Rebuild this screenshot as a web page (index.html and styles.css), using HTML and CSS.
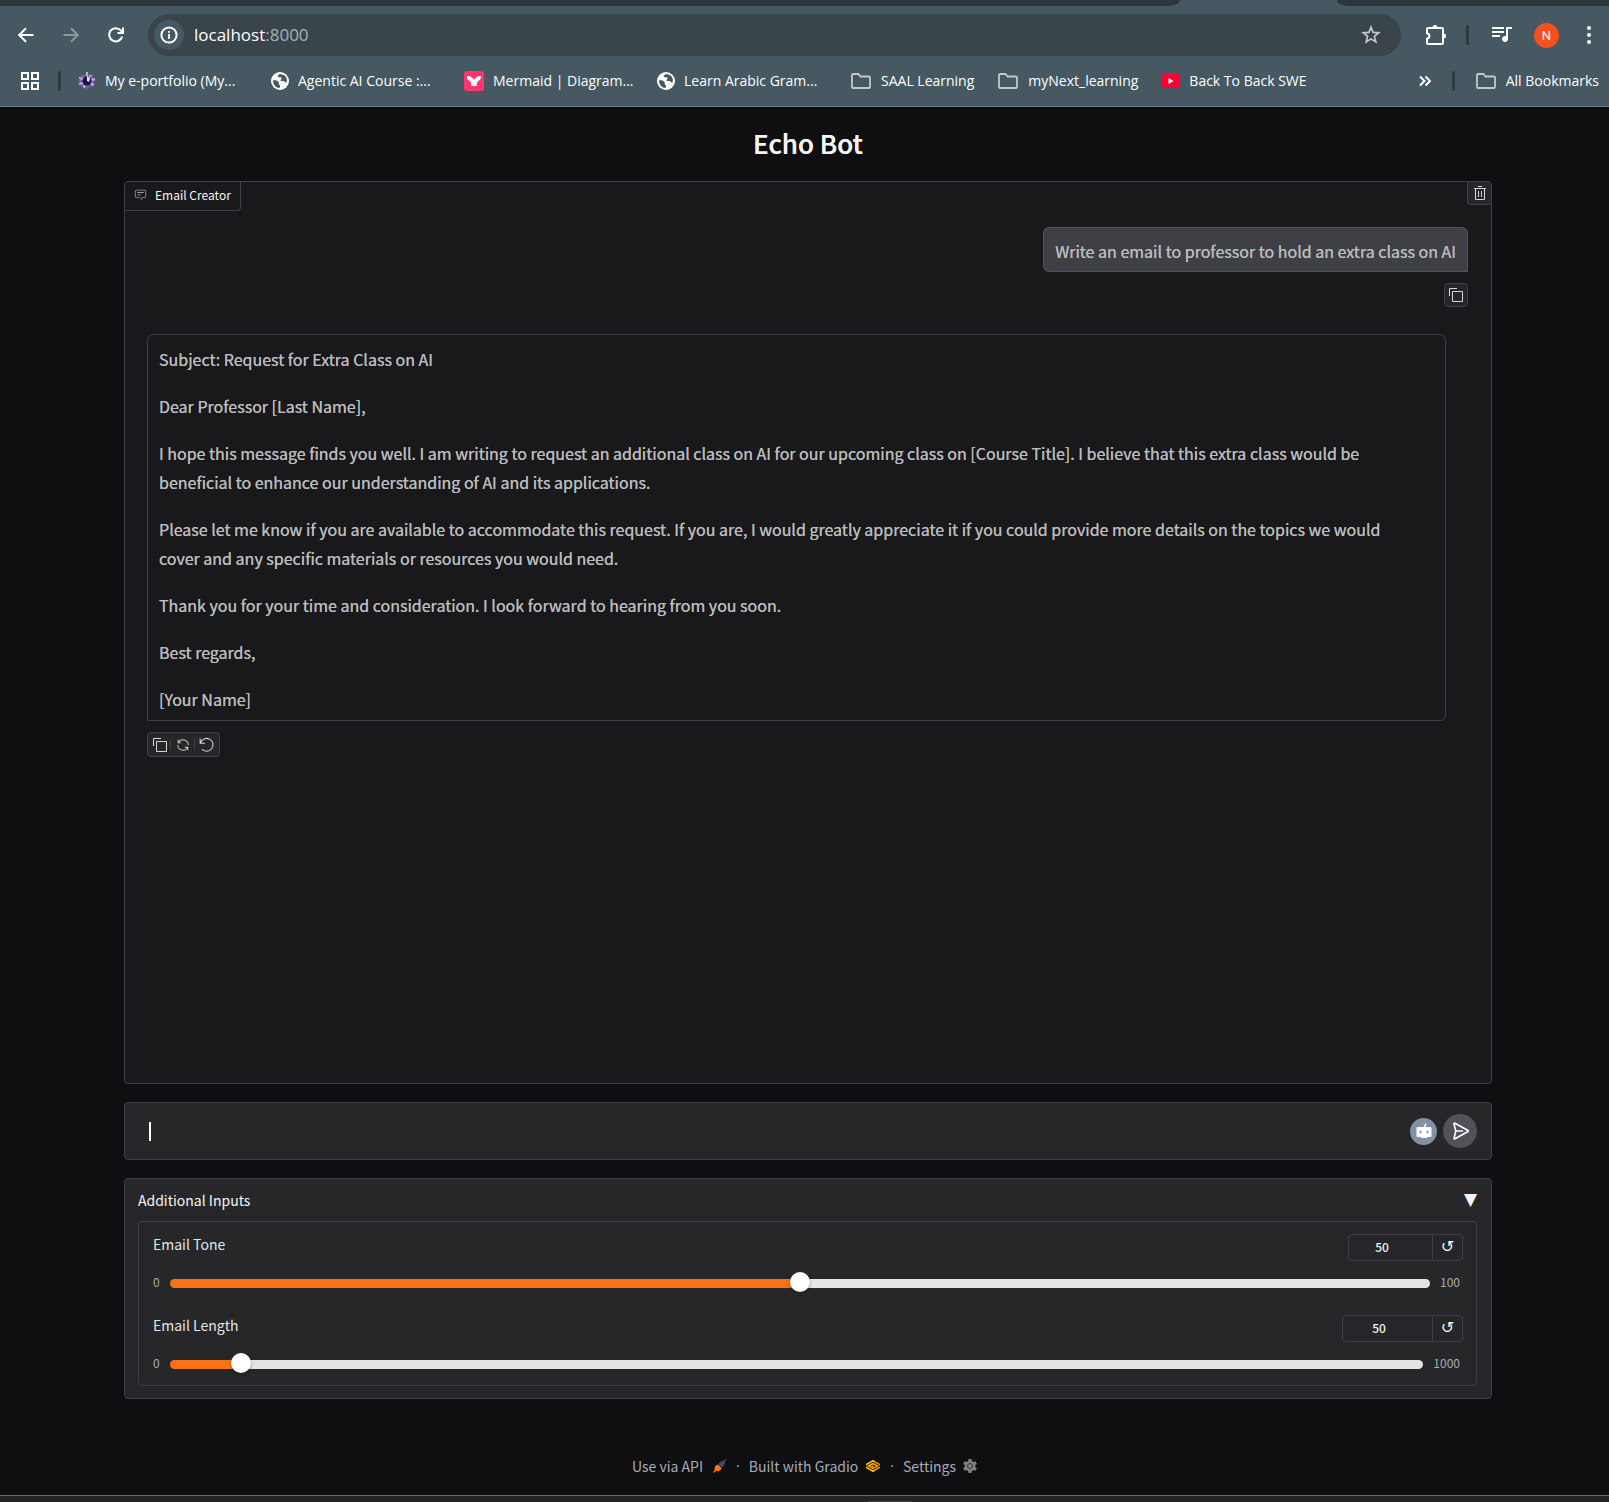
FILE: index.html
```html
<!DOCTYPE html>
<html lang="en">
<head>
<meta charset="utf-8">
<title>Echo Bot</title>
<link rel="stylesheet" href="styles.css">
</head>
<body>
<svg class="defs" aria-hidden="true">
  <symbol id="folder" viewBox="0 0 22 18"><path d="M3 2h5.500l2 2.500H19a1 1 0 0 1 1 1V15a1 1 0 0 1-1 1H3a1 1 0 0 1-1-1V3a1 1 0 0 1 1-1z" fill="none" stroke="#c7c7c7" stroke-width="1.800"/></symbol>
  <symbol id="globe" viewBox="0 0 18 18"><circle cx="9" cy="9" r="9" fill="#fff"/><path d="M2 8.500c2.500-.5 4.500.2 5.500 1.500s-.5 2 .5 2.500 1.500 1 .5 3.500C5 16 2 13 2 8.500zM8.500 2c-1 1.500-2.500 2-1.500 3s3-.5 3.500 1-1.500 1.500-1 2.500 3 0 4 1 1 1.500 2 1C17 6 14 2 8.500 2z" fill="#465861"/></symbol>
  <symbol id="copy" viewBox="0 0 32 32"><path d="M28 10v18H10V10h18m0-2H10a2 2 0 0 0-2 2v18a2 2 0 0 0 2 2h18a2 2 0 0 0 2-2V10a2 2 0 0 0-2-2ZM4 18H2V4a2 2 0 0 1 2-2h14v2H4Z"/></symbol>
</svg>

<header class="browser">
  <div class="tabs"><div class="tabs-left"></div><div class="tabs-right"></div></div>
  <nav class="toolbar" aria-label="Browser">
    <button class="tool" aria-label="Back"><svg width="16" height="16" viewBox="0 0 16 16"><path d="M15.500 8H1.500M8 1.200 1.200 8 8 14.800" class="line"/></svg></button>
    <button class="tool dim" aria-label="Forward"><svg width="16" height="16" viewBox="0 0 16 16"><path d="M.5 8h14M8 1.200 14.800 8 8 14.800" class="line"/></svg></button>
    <button class="tool" aria-label="Reload"><svg width="16" height="16" viewBox="0 0 16 16"><path d="M14.200 9.500A6.600 6.600 0 1 1 12.800 3.400L14.500 5.400M15 .5v5.500H9.500" class="line"/></svg></button>
    <div class="omnibox">
      <span class="info"><svg width="18" height="18" viewBox="0 0 18 18"><circle cx="9" cy="9" r="7.600" class="line thin"/><path d="M9 8v5M9 5v1.800" class="line"/></svg></span>
      <a class="url" href="#">localhost<span>:8000</span></a>
      <button class="star" aria-label="Bookmark"><svg width="20" height="20" viewBox="0 0 20 20"><path d="m10 2.200 2.100 5.200 5.600.4-4.300 3.600 1.400 5.500-4.800-3-4.800 3 1.400-5.500-4.300-3.600 5.600-.4z" fill="none" stroke="#c7c7c7" stroke-width="1.700"/></svg></button>
    </div>
    <button class="tool ext" aria-label="Extensions"><svg width="22" height="22" viewBox="0 0 22 22"><path d="M3 4h14a1 1 0 0 1 1 1v14a1 1 0 0 1-1 1H3a1 1 0 0 1-1-1v-4.200c3.200-.8 3.200-4.800 0-5.600V5a1 1 0 0 1 1-1z" class="line"/><path d="M7.500 3.500a2.500 2.500 0 0 1 5 0zM18.500 9.500a2.500 2.500 0 0 1 0 5z" fill="#fff"/></svg></button>
    <span class="divider"></span>
    <button class="tool" aria-label="Media"><svg width="22" height="22" viewBox="1 1 22 22"><path fill="#fff" d="M14 4H2v2h12V4zm0 4H2v2h12V8zM2 14h8v-2H2v2zM16 4v9.200c-.3-.1-.65-.2-1-.2-1.660 0-3 1.340-3 3s1.340 3 3 3 3-1.340 3-3V6h4V4h-6z"/></svg></button>
    <button class="tool" aria-label="Profile"><span class="avatar">N</span></button>
    <button class="tool" aria-label="Menu"><svg width="6" height="20" viewBox="0 0 6 20"><g fill="#fff"><circle cx="3" cy="3" r="2"/><circle cx="3" cy="10" r="2"/><circle cx="3" cy="17" r="2"/></g></svg></button>
  </nav>
  <nav class="bookmarks" aria-label="Bookmarks">
    <button class="apps" aria-label="Tab groups"><svg width="18" height="18" viewBox="0 0 18 18"><path d="M1 1h6v6H1zM11 1h6v6h-6zM1 11h6v6H1zM11 11h6v6h-6z" class="line"/></svg></button>
    <span class="divider"></span>
    <a class="mark wide" href="#"><svg width="18" height="18" viewBox="0 0 18 18"><g fill="#7a5fa8"><rect x="3" y="3" width="12" height="12"/><rect x="3" y="3" width="12" height="12" transform="rotate(45 9 9)"/></g><path d="M1 6l4 1M1 12l4-1M9 0v4M13 3l-2 3M17 7l-4 1M16 13l-4-2M6 16l1-4" stroke="#b9aee0" stroke-width="2"/><circle cx="9" cy="9" r="4.500" fill="#20143c"/><path d="M9 4l3 2-1 4-2-1z" fill="#e8e6f6"/></svg><span>My e-portfolio (My...</span></a>
    <a class="mark wide" href="#"><svg width="18" height="18"><use href="#globe"/></svg><span>Agentic AI Course :...</span></a>
    <a class="mark wide" href="#"><svg width="20" height="20" viewBox="0 0 20 20"><rect width="20" height="20" rx="3" fill="#ff3670"/><path d="M3 5c3-.3 6 1.500 7 4 1-2.500 4-4.300 7-4 .2 2.500-1 4-3 5.500-1 .8-1.300 2-1.300 4.500H7.300c0-2.500-.3-3.700-1.300-4.500C4 9 2.800 7.500 3 5z" fill="#fff"/></svg><span>Mermaid | Diagram...</span></a>
    <a class="mark wide" href="#"><svg width="18" height="18"><use href="#globe"/></svg><span>Learn Arabic Gram...</span></a>
    <a class="mark" href="#"><svg width="22" height="18"><use href="#folder"/></svg><span>SAAL Learning</span></a>
    <a class="mark" href="#"><svg width="22" height="18"><use href="#folder"/></svg><span>myNext_learning</span></a>
    <a class="mark" href="#"><svg width="19" height="14" viewBox="0 0 19 14"><rect width="19" height="14" rx="2" fill="#ff0033"/><path d="M7.500 4l5 3-5 3z" fill="#fff"/></svg><span>Back To Back SWE</span></a>
    <button class="more" aria-label="More bookmarks"><svg width="12" height="12" viewBox="0 0 12 12"><path d="m1 1.500 4.500 4.500L1 10.500M6.500 1.500 11 6l-4.500 4.500" class="line"/></svg></button>
    <span class="divider"></span>
    <a class="mark all" href="#"><svg width="22" height="18"><use href="#folder"/></svg><span>All Bookmarks</span></a>
  </nav>
</header>

<main class="app">
  <h1>Echo Bot</h1>

  <section class="chat" aria-label="Email Creator">
    <div class="chat-top">
      <div class="chat-label"><svg width="13" height="13" viewBox="0 0 32 32" fill="#9a9aa2"><path d="M17.740 30L16 29l4-7h6a2 2 0 0 0 2-2V8a2 2 0 0 0-2-2H6a2 2 0 0 0-2 2v12a2 2 0 0 0 2 2h9v2H6a4 4 0 0 1-4-4V8a4 4 0 0 1 4-4h20a4 4 0 0 1 4 4v12a4 4 0 0 1-4 4h-4.840ZM8 10h16v2H8zm0 6h10v2H8z"/></svg>Email Creator</div>
      <button class="clear" aria-label="Clear"><svg width="16" height="16" viewBox="0 0 32 32"><path d="M12 12h2v12h-2zM18 12h2v12h-2zM4 6v2h2v20a2 2 0 0 0 2 2h16a2 2 0 0 0 2-2V8h2V6zm4 22V8h16v20zM12 2h8v2h-8z"/></svg></button>
    </div>
    <div class="messages">
      <div class="bubble user"><p>Write an email to professor to hold an extra class on AI</p></div>
      <div class="actions user-actions"><button aria-label="Copy message"><svg width="16" height="16"><use href="#copy"/></svg></button></div>
      <div class="bubble bot">
        <p>Subject: Request for Extra Class on AI</p>
        <p>Dear Professor [Last Name],</p>
        <p>I hope this message finds you well. I am writing to request an additional class on AI for our upcoming class on [Course Title]. I believe that this extra class would be beneficial to enhance our understanding of AI and its applications.</p>
        <p>Please let me know if you are available to accommodate this request. If you are, I would greatly appreciate it if you could provide more details on the topics we would cover and any specific materials or resources you would need.</p>
        <p>Thank you for your time and consideration. I look forward to hearing from you soon.</p>
        <p>Best regards,</p>
        <p>[Your Name]</p>
      </div>
      <div class="actions bot-actions">
        <button aria-label="Copy message"><svg width="16" height="16"><use href="#copy"/></svg></button>
        <button aria-label="Retry"><svg width="14" height="14" viewBox="0 0 32 32"><path d="M12 10H6.780A11 11 0 0 1 27 16h2A13 13 0 0 0 6 7.680V4H4v8h8zm8 12h5.220A11 11 0 0 1 5 16H3a13 13 0 0 0 23 8.320V28h2v-8h-8z"/></svg></button>
        <button aria-label="Undo"><svg width="16" height="16" viewBox="0 0 16 16"><path d="M1.200 1.500v4.700h4.700M1.500 6A6.400 6.400 0 1 1 2.800 12" fill="none" stroke="currentColor" stroke-width="1.100"/></svg></button>
      </div>
    </div>
  </section>

  <form class="composer">
    <span class="caret"></span>
    <input type="text" aria-label="Message">
    <span class="robot"><svg width="16" height="16" viewBox="0 0 16 16"><path d="M10 .5 8.500 4" stroke="#fff" stroke-width="1.500"/><rect x=".5" y="4" width="15" height="10" rx="1" fill="#fff"/><rect x="5" y="13" width="6" height="2" fill="#fff"/><circle cx="4.500" cy="9" r="1.200" fill="#8491a5"/><circle cx="11.500" cy="9" r="1.200" fill="#8491a5"/></svg></span>
    <button type="button" class="send" aria-label="Send"><svg width="18" height="18" viewBox="-1 0 18 18"><path d="M3.500 9H11M2 1.700c0-.6.500-.8 1-.5L16 8.500c.5.300.5.700 0 1L3 16.800c-.5.300-1.100 0-.9-.7L3.800 9 2 2z" fill="none" stroke="#fff" stroke-width="1.600" stroke-linejoin="round"/></svg></button>
  </form>

  <section class="accordion">
    <button class="accordion-head"><span>Additional Inputs</span><span class="arrow">▼</span></button>
    <div class="fields">
      <div class="field">
        <div class="field-head"><label for="tone">Email Tone</label>
          <div class="number"><input type="number" value="50" aria-label="Email Tone value"><button aria-label="Reset tone">↺</button></div></div>
        <div class="range"><span>0</span><input id="tone" type="range" min="0" max="100" value="50" style="--fill:50%"><span>100</span></div>
      </div>
      <div class="field">
        <div class="field-head"><label for="length">Email Length</label>
          <div class="number long"><input type="number" value="50" aria-label="Email Length value"><button aria-label="Reset length">↺</button></div></div>
        <div class="range"><span>0</span><input id="length" type="range" min="0" max="1000" value="50" style="--fill:5%"><span>1000</span></div>
      </div>
    </div>
  </section>
</main>

<footer class="footer">
  <a href="#" class="api">Use via API <svg class="rocket" width="14" height="14" viewBox="0 0 14 14"><path d="M5.500 5.500C6.500 3 8.500 1.700 10.500 1.800L12.800 0l.8.8-1.500 2c.3 2.200-1 4.200-3.500 5.500z" fill="#3f4a5f"/><path d="M4.800 5.500 8.600 9.200c-1 2.300-3.100 3.300-5.600 2.800L1 13.800l-1-.600L1.700 11C1 8.500 2.500 6.300 4.800 5.500z" fill="#ff7c00"/></svg></a>
  <span class="dot">·</span>
  <a href="#">Built with Gradio <svg class="logo" width="16" height="14" viewBox="0 0 16 14"><path d="M8 1 15 5v4l-7 4-7-4V5z" fill="#ff9d00"/><path d="M8 1 1 5v4l7 4 2-1-6-3.500V6l6-3.700z" fill="#ffc800"/><path d="M1 7 8 3.200 15 7M1 7l7 3.800L15 7M5.500 7.500 8 6l2.500 1.200L8 8.300" fill="none" stroke="#3a2608" stroke-width="1"/></svg></a>
  <span class="dot">·</span>
  <a href="#">Settings <svg class="gear" width="14" height="14" viewBox="0 0 14 14"><g fill="#808080"><circle cx="7" cy="7" r="5.300"/><path d="M5.500 0h3l.5 3H5zM5.500 14h3l.5-3H5z"/><path d="M5.500 0h3l.5 3H5zM5.500 14h3l.5-3H5z" transform="rotate(60 7 7)"/><path d="M5.500 0h3l.5 3H5zM5.500 14h3l.5-3H5z" transform="rotate(120 7 7)"/></g><circle cx="7" cy="7" r="2.500" fill="none" stroke="#333" stroke-width="1"/></svg></a>
</footer>
<div class="taskbar"><span></span></div>
</body>
</html>
```
FILE: styles.css
```css
* { box-sizing: border-box; }
body {
  margin: 0;
  min-height: 100vh;
  display: flex;
  flex-direction: column;
  background: #0f0f11;
  color: #f4f4f5;
  font-family: "Noto Sans CJK SC", sans-serif;
}
button, input { font: inherit; color: inherit; }
button { border: 0; padding: 0; background: none; display: flex; align-items: center; justify-content: center; }
a { color: inherit; text-decoration: none; }
svg { flex: none; }
.defs { display: none; }
.line { fill: none; stroke: currentColor; stroke-width: 2; }

/* browser bar */
.browser {
  background: #465861;
  border-bottom: 1px solid #6f7f87;
  color: #fff;
  font: 14px/20px "Open Sans", "Noto Sans", sans-serif;
}
.tabs { display: flex; height: 6px; justify-content: space-between; }
.tabs-left { width: 1180px; background: #2c363c; border-bottom-right-radius: 12px 6px; }
.tabs-right { width: 272px; background: #2c363c; border-bottom-left-radius: 12px 6px; }
.toolbar { display: flex; align-items: center; padding: 8px 0 0 3px; }
.tool { width: 45px; height: 40px; }
.dim { color: #8d989e; }
.omnibox {
  flex: 1;
  display: flex;
  align-items: center;
  height: 42px;
  margin: 0 12px 0 10px;
  padding: 0 20px 0 6px;
  border-radius: 21px;
  background: #39454b;
  font-size: 17px;
}
.info { display: flex; align-items: center; justify-content: center; width: 30px; height: 30px; border-radius: 15px; background: #465861; }
.url { flex: 1; margin-left: 10px; }
.url span { color: #a8b0b4; }
.divider { width: 3px; height: 20px; border-radius: 2px; background: #2f3b41; }
.toolbar .divider { margin: 0 10px 0 8px; }
.toolbar > .tool:last-child { width: 40px; }
.avatar { width: 25px; height: 25px; border-radius: 13px; background: #f4511e; font: 13px/25px Roboto, sans-serif; }
.bookmarks { display: flex; align-items: center; height: 50px; padding: 0 10px 0 21px; }
.bookmarks > .divider { margin-left: 19px; }
.mark { display: flex; align-items: center; gap: 9px; margin-right: 23px; white-space: nowrap; }
.mark.wide { width: 193px; margin: 0; }
.bookmarks > .divider + .mark.wide { margin-left: 17px; }
.more { margin-left: auto; }
.mark.all { margin: 0 0 0 20px; }
.bookmarks > .more + .divider { margin-left: 21px; }

/* app */
.app { display: flex; flex-direction: column; gap: 18px; padding: 18px 117px 0 124px; }
h1 { margin: 0 0 2px; font-size: 26px; line-height: 36px; font-weight: 500; text-align: center; text-shadow: 0 0 0 currentColor; }
.chat { min-height: 903px; border: 1px solid #3f3f46; border-radius: 4px; background: #19191b; }
.chat-top { display: flex; justify-content: space-between; align-items: flex-start; }
.chat-label {
  display: flex; align-items: center; gap: 8px;
  height: 29px; padding: 0 9px 3px;
  border: solid #3f3f46; border-width: 0 1px 1px 0; border-bottom-right-radius: 4px;
  font-size: 12px; line-height: 18px;
}
.clear { width: 24px; height: 23px; background: #27272a; border: solid #3f3f46; border-width: 0 0 1px 1px; border-bottom-left-radius: 4px; }
.clear svg, .actions svg { fill: #d4d4d8; color: #d4d4d8; }
.messages { display: flex; flex-direction: column; align-items: flex-start; padding: 16px 23px 24px 22px; }
.bubble {
  border: 1px solid #3f3f46; border-radius: 6px;
  padding: 10px 11px 6px;
  color: #bbbbbd; font-size: 16px; line-height: 29px;
  text-shadow: 0 0 0 currentColor;
}
.bubble p { margin: 0; }
.bubble p + p { margin-top: 18px; }
.user { align-self: flex-end; background: #3f3f46; border-color: #52525b; border-bottom-right-radius: 0; padding: 9px 11px 5px; }
.bot { width: calc(100% - 22px); padding-right: 36px; border-bottom-left-radius: 0; }
.actions { display: flex; align-items: center; height: 25px; border: 1px solid #3f3f46; border-radius: 4px; background: #27272a; }
.actions button { width: 24px; }
.actions button:first-child { width: 23px; }
.actions button + button { box-shadow: -1px 0 0 #3f3f46; height: 11px; }
.user-actions { align-self: flex-end; width: 24px; height: 24px; margin: 11px 0 27px; justify-content: center; }
.bot-actions { margin-top: 11px; }

.composer { display: flex; align-items: center; height: 58px; padding: 0 14px 0 24px; border: 1px solid #3f3f46; border-radius: 4px; background: #27272a; }
.caret { width: 2px; height: 19px; background: #fff; }
.composer input { flex: 1; min-width: 0; border: 0; outline: 0; background: none; font-size: 16px; }
.robot { display: flex; align-items: center; justify-content: center; width: 27px; height: 27px; border-radius: 14px; background: #8491a5; }
.send { width: 34px; height: 34px; margin-left: 6px; border-radius: 17px; background: #52525b; }

.accordion { padding: 11px 14px 12px 13px; border: 1px solid #3f3f46; border-radius: 4px; background: #27272a; }
.accordion-head { width: 100%; justify-content: space-between; font-size: 14px; line-height: 20px; }
.arrow { font: 17px/18px "DejaVu Sans", sans-serif; padding-bottom: 2px; }
.fields { display: flex; flex-direction: column; gap: 22px; margin-top: 11px; padding: 12px 13px 11px 14px; border: 1px solid #3f3f46; border-radius: 4px; }
.field-head { display: flex; justify-content: space-between; font-size: 14px; line-height: 20px; color: #e4e4e7; }
.number { display: flex; width: 115px; height: 27px; border: 1px solid #3f3f46; border-radius: 4px; color: #f4f4f5; }
.long { width: 121px; }
.number input { flex: 1; min-width: 0; padding: 0 17px 1px 0; border: 0; background: none; text-align: center; font-size: 12px; font-weight: 500; appearance: textfield; }
.number input::-webkit-inner-spin-button { appearance: none; margin: 0; }
.number button { width: 30px; border-left: 1px solid #3f3f46; padding-bottom: 2px; font: 16px/20px "DejaVu Sans", sans-serif; }
.range { display: flex; align-items: center; gap: 10px; height: 20px; margin-top: 12px; padding-right: 3px; font-size: 12px; line-height: 20px; color: #a9aab4; }
.range span { margin-top: -2px; }
.range input { flex: 1; min-width: 0; height: 20px; margin: 0; appearance: none; background: none; }
.range input::-webkit-slider-runnable-track {
  height: 9px; border-radius: 5px;
  background: linear-gradient(to right, #f97316 var(--fill), #e4e4e7 var(--fill));
}
.range input::-webkit-slider-thumb { appearance: none; width: 20px; height: 20px; margin-top: -7px; border-radius: 50%; background: #fff; box-shadow: 0 1px 3px #0006; }

.footer { display: flex; justify-content: center; align-items: center; gap: 9px; margin-top: auto; padding-bottom: 18px; font-size: 14px; line-height: 22px; color: #a9aab8; }
.footer a { display: flex; align-items: center; gap: 7px; }
.footer .api { gap: 10px; }
.dot { font-family: "Open Sans", sans-serif; }
.taskbar { display: flex; justify-content: center; align-items: flex-end; height: 7px; border-top: 1px solid #6b6b6b; background: #222; }
.taskbar span { width: 44px; height: 1px; margin-left: 170px; background: #444; }
```
